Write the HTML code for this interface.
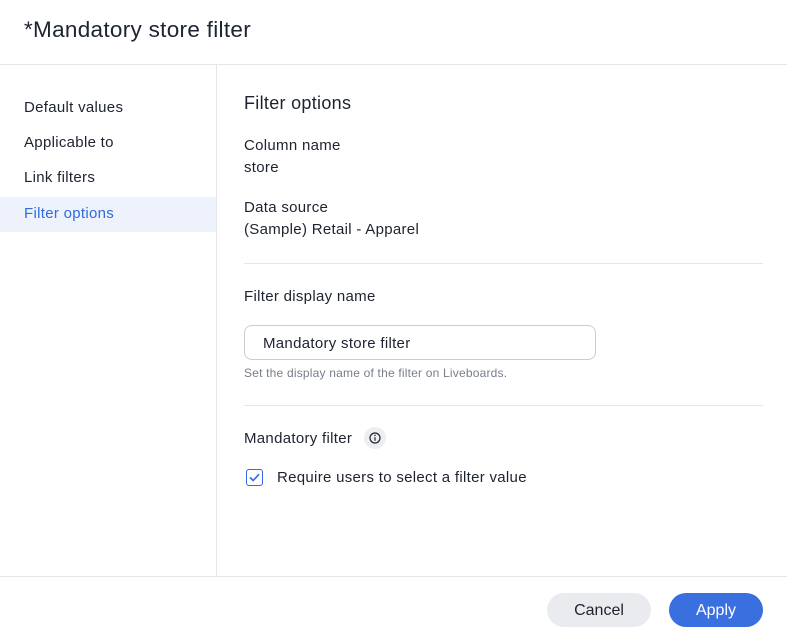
<!DOCTYPE html>
<html><head><style>
*{box-sizing:border-box;margin:0;padding:0}
body{width:787px;height:639px;background:#fff;font-family:"Liberation Sans",sans-serif;color:#1d232f;position:relative;overflow:hidden}
.abs{position:absolute;white-space:nowrap}
.t{font-size:15px;letter-spacing:0.3px}
</style></head><body>
<div class="abs" style="left:24px;top:17px;font-size:22.5px;letter-spacing:0.3px">*Mandatory store filter</div>
<div class="abs" style="left:0;top:64px;width:787px;height:1px;background:#e4e6ea"></div>
<div class="abs" style="left:216px;top:65px;width:1px;height:511px;background:#e4e6ea"></div>
<div class="abs t" style="left:24px;top:99px">Default values</div>
<div class="abs t" style="left:24px;top:134px">Applicable to</div>
<div class="abs t" style="left:24px;top:169px">Link filters</div>
<div class="abs" style="left:0;top:197px;width:216px;height:35px;background:#eef2fc"></div>
<div class="abs t" style="left:24px;top:205px;color:#2f6ae1">Filter options</div>
<div class="abs" style="left:244px;top:93px;font-size:18px;letter-spacing:0.3px">Filter options</div>
<div class="abs t" style="left:244px;top:137px">Column name</div>
<div class="abs t" style="left:244px;top:159px">store</div>
<div class="abs t" style="left:244px;top:199px">Data source</div>
<div class="abs t" style="left:244px;top:221px">(Sample) Retail - Apparel</div>
<div class="abs" style="left:244px;top:263px;width:519px;height:1px;background:#e4e6ea"></div>
<div class="abs t" style="left:244px;top:288px">Filter display name</div>
<div class="abs" style="left:244px;top:325px;width:352px;height:35px;border:1px solid #c9ccd2;border-radius:8px"></div>
<div class="abs t" style="left:263px;top:335px">Mandatory store filter</div>
<div class="abs" style="left:244px;top:366px;font-size:12px;color:#777e8a;letter-spacing:0.2px">Set the display name of the filter on Liveboards.</div>
<div class="abs" style="left:244px;top:405px;width:519px;height:1px;background:#e4e6ea"></div>
<div class="abs t" style="left:244px;top:430px">Mandatory filter</div>
<div class="abs" style="left:364px;top:427px;width:22px;height:22px;border-radius:50%;background:#eceef2"></div>
<svg class="abs" style="left:369px;top:432px" width="12" height="12" viewBox="0 0 12 12"><circle cx="6" cy="6" r="5" fill="none" stroke="#1d232f" stroke-width="1.2"/><line x1="6" y1="5.2" x2="6" y2="8.8" stroke="#1d232f" stroke-width="1.2"/><circle cx="6" cy="3.4" r=".75" fill="#1d232f"/></svg>
<div class="abs" style="left:246px;top:469px;width:17px;height:17px;border:1.5px solid #2f6ae1;border-radius:3px"></div>
<svg class="abs" style="left:246px;top:469px" width="17" height="17" viewBox="0 0 17 17"><path d="M4 8.5 L7.2 11.5 L13 5.2" fill="none" stroke="#2f6ae1" stroke-width="1.6"/></svg>
<div class="abs t" style="left:277px;top:469px">Require users to select a filter value</div>
<div class="abs" style="left:0;top:576px;width:787px;height:1px;background:#e4e6ea"></div>
<div class="abs" style="left:547px;top:593px;width:104px;height:34px;border-radius:17px;background:#eaebef;font-size:16px;text-align:center;line-height:35px">Cancel</div>
<div class="abs" style="left:669px;top:593px;width:94px;height:34px;border-radius:17px;background:#3a6fe0;color:#fff;font-size:16px;text-align:center;line-height:35px">Apply</div>
</body></html>
